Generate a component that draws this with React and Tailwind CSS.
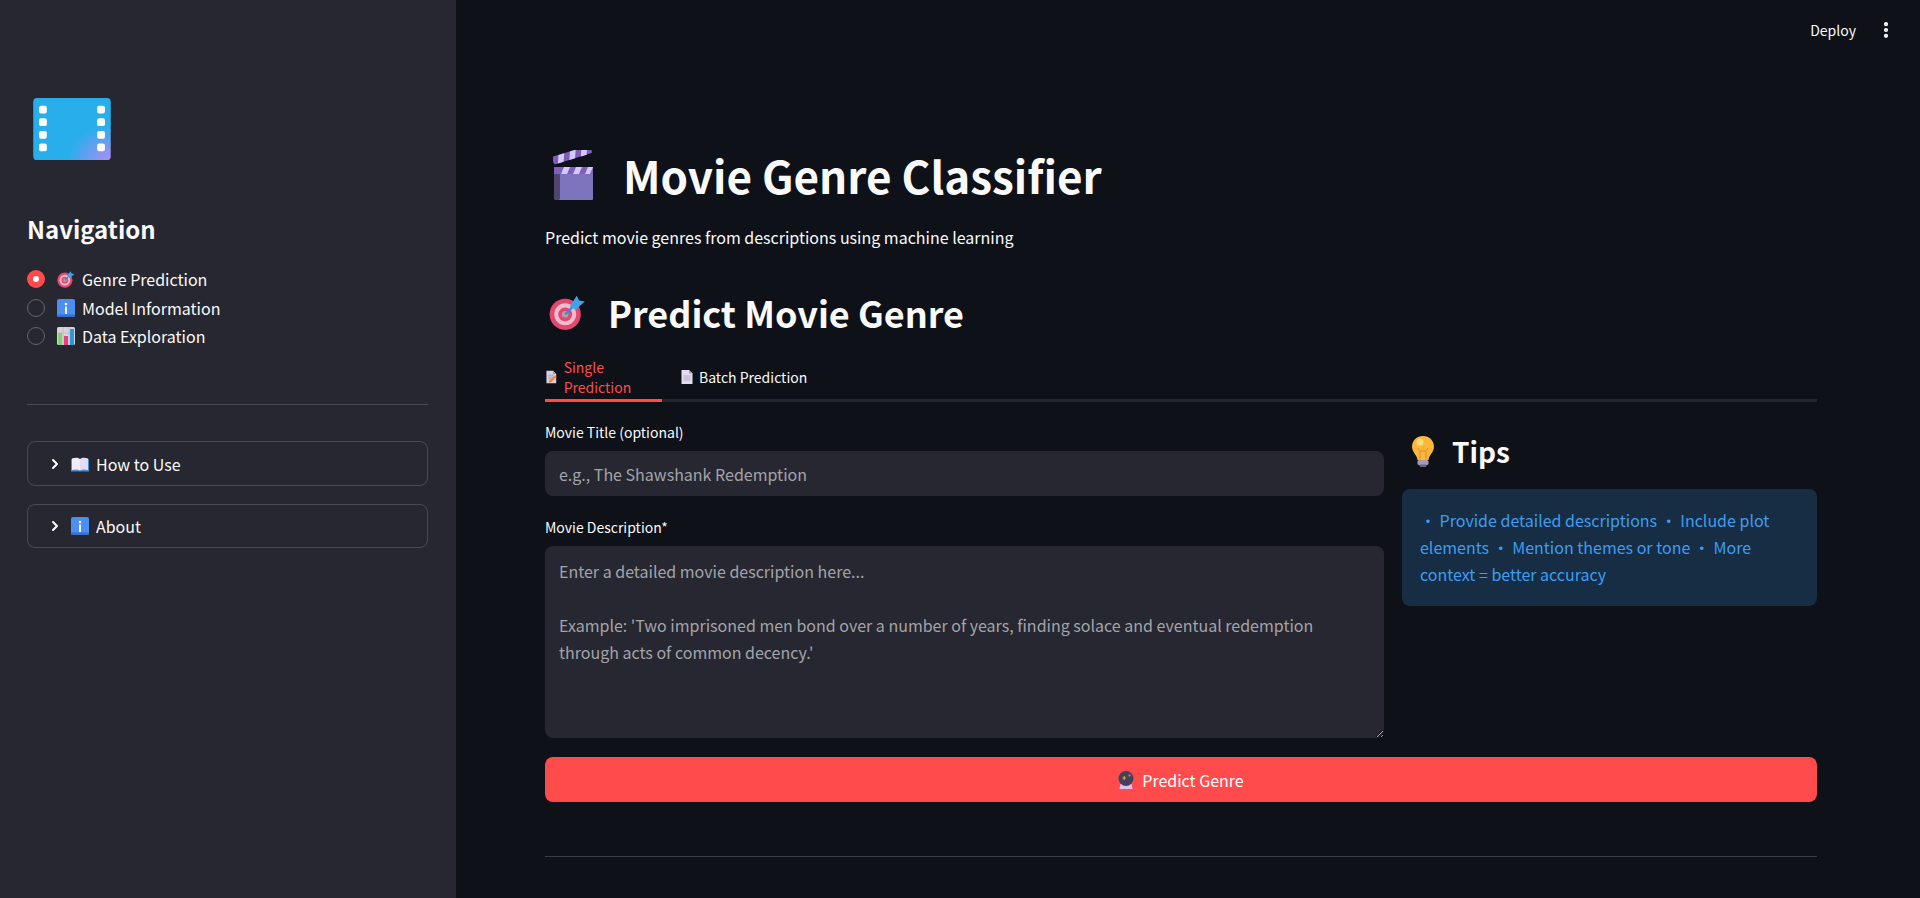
import { ChevronRight, EllipsisVertical } from "lucide-react";

function FilmLogo() {
  return (
    <svg viewBox="0 0 80 64" className="h-[62px] w-[80px]">
      <defs>
        <radialGradient id="filmCorner" cx="1" cy="1" r="0.55">
          <stop offset="0" stopColor="#b08cf5" />
          <stop offset="1" stopColor="#29aeec" />
        </radialGradient>
      </defs>
      <rect width="80" height="64" rx="4" fill="url(#filmCorner)" />
      {[8, 21, 34, 47].map((y) => (
        <g key={y} fill="#fff">
          <rect x="6" y={y} width="8" height="8" rx="2" />
          <rect x="66" y={y} width="8" height="8" rx="2" />
        </g>
      ))}
    </svg>
  );
}

function Clapper({ className }) {
  return (
    <svg viewBox="0 0 40 50" className={className}>
      <g transform="rotate(-17 3 14)">
        <rect x="1" y="6" width="40" height="8" rx="1.5" fill="#7e5cb8" />
        <path d="M8 6h6l-3 8H5zM20 6h6l-3 8h-6zM32 6h6l-3 8h-6z" fill="#d3c9fb" />
      </g>
      <rect x="1" y="17" width="40" height="33" rx="3" fill="#7d74bd" />
      <rect x="1" y="17" width="6" height="33" rx="2" fill="#50456f" />
      <rect x="1" y="17" width="40" height="7" fill="#7f5fb9" />
      <path d="M11 17h6l-3 7H8zM23 17h6l-3 7h-6zM35 17h5l-3 7h-5z" fill="#d3c9fb" />
    </svg>
  );
}

function Target({ className }) {
  return (
    <svg viewBox="0 0 32 32" className={className}>
      <circle cx="14" cy="18" r="13.5" fill="#e5476e" />
      <circle cx="14" cy="18" r="9.5" fill="#f2bcd0" />
      <circle cx="14" cy="18" r="6" fill="#e5476e" />
      <circle cx="14" cy="18" r="2.8" fill="#a9a4b2" />
      <path d="M14 18 22 10" stroke="#3d8bd4" strokeWidth="2" />
      <path d="M18 11 24 2l2 4 5 1-8 7z" fill="#3ea4ea" />
    </svg>
  );
}

function InfoIcon({ className }) {
  return (
    <svg viewBox="0 0 18 18" className={className}>
      <rect width="18" height="18" rx="2" fill="#4b8ff2" />
      <rect x="0" y="15.5" width="18" height="2.5" rx="1.2" fill="#3a70cc" />
      <circle cx="9" cy="5" r="1.3" fill="#fff" />
      <rect x="8" y="7.5" width="2" height="7.5" fill="#eef4ff" />
    </svg>
  );
}

function ChartIcon({ className }) {
  return (
    <svg viewBox="0 0 18 18" className={className}>
      <rect width="18" height="18" rx="1.5" fill="#d6d2da" />
      <path d="M6 0v18M12 0v18M0 6h18" stroke="#b9b4c0" strokeWidth="0.6" />
      <rect x="1" y="6" width="4" height="12" fill="#7ed56f" />
      <rect x="7" y="9" width="4" height="9" fill="#ec3d84" />
      <rect x="13" y="2" width="4" height="16" fill="#2d97dc" />
    </svg>
  );
}

function BookIcon({ className }) {
  return (
    <svg viewBox="0 0 18 18" className={className}>
      <path d="M0 4v12.5h18V4z" fill="#3f8fe0" />
      <path d="M1 3.5c3-1 6-1 8 .5v11.5c-2-1.2-5-1.4-8-.5z" fill="#f1ecf8" />
      <path d="M17 3.5c-3-1-6-1-8 .5v11.5c2-1.2 5-1.4 8-.5z" fill="#e4dcf2" />
    </svg>
  );
}

function MemoIcon({ className }) {
  return (
    <svg viewBox="0 0 12 14" className={className}>
      <path d="M0.5 0h7.5l3.5 3.5V14H0.5z" fill="#d9d0e2" />
      <path d="M8 0v3.5h3.5z" fill="#9c93a8" />
      <path d="M2.5 5h6M2.5 7h5M2.5 9h3" stroke="#9f97aa" strokeWidth="0.8" />
      <path d="M3 13.5 4 10.5 10.2 5l1.8 2-6 6z" fill="#f08a3c" />
    </svg>
  );
}

function PageIcon({ className }) {
  return (
    <svg viewBox="0 0 12 14" className={className}>
      <path d="M0.5 0h7.5l3.5 3.5V14H0.5z" fill="#e6dcef" />
      <path d="M8 0v3.5h3.5z" fill="#a79fb4" />
      <path d="M2.5 6h7M2.5 8h7M2.5 10h7" stroke="#a79fb4" strokeWidth="0.8" />
    </svg>
  );
}

function Bulb({ className }) {
  return (
    <svg viewBox="0 0 24 32" className={className}>
      <path
        d="M12 1C5.6 1 1 5.800 1 11.500c0 6 5 8 5.500 13.500h11C18 19.500 23 17.500 23 11.500 23 5.800 18.400 1 12 1z"
        fill="#fbb73c"
      />
      <circle cx="9" cy="7" r="3.500" fill="#ffdc7a" />
      <path d="M9 25v-9l-2-3M15 25v-9l2-3M9 16h6" stroke="#e58a2c" strokeWidth="1" fill="none" />
      <rect x="6.500" y="25" width="11" height="5" rx="1.500" fill="#a79ab8" />
      <rect x="8.500" y="29.500" width="7" height="2.500" rx="1" fill="#6e6280" />
    </svg>
  );
}

function CrystalBall({ className }) {
  return (
    <svg viewBox="0 0 16 18" className={className}>
      <path d="M2.500 13h11l1 5h-13z" fill="#d9c3f0" />
      <circle cx="8" cy="7.500" r="7.500" fill="#45405c" />
      <path d="M4.500 6.500h1.200V5h1v1.500H8v1H6.700V9h-1V7.500H4.500z" fill="#f5a93c" />
      <circle cx="11.500" cy="4.500" r="1" fill="#d59a3f" />
    </svg>
  );
}

function RadioRow({ icon, label, active }) {
  return (
    <div className="flex h-[28.5px] items-center">
      {active ? (
        <span className="flex h-[18px] w-[18px] items-center justify-center rounded-full bg-[#ff4b4b]">
          <span className="h-[6px] w-[6px] rounded-full bg-white" />
        </span>
      ) : (
        <span className="h-[18px] w-[18px] rounded-full border-[1.5px] border-[#63656c]" />
      )}
      <span className="ml-[12px] mr-[7px]">{icon}</span>
      <span className="text-base leading-6 text-[#fafafa]">{label}</span>
    </div>
  );
}

function Expander({ icon, label, height }) {
  return (
    <div className={`flex items-center rounded-lg border border-[#494a53] pl-[19px] ${height}`}>
      <ChevronRight className="h-[16px] w-[16px] text-white" strokeWidth={3} />
      <span className="ml-[8px] mr-[7px]">{icon}</span>
      <span className="text-base leading-6 text-[#fafafa]">{label}</span>
    </div>
  );
}

function Sidebar() {
  return (
    <aside className="flex h-full w-[456px] shrink-0 flex-col bg-[#262730] px-[27px] pt-[98px]">
      <div className="ml-[5px] h-[62px]">
        <FilmLogo />
      </div>
      <h2 className="mt-[53px] text-2xl leading-8 font-semibold text-[#fafafa]">Navigation</h2>
      <div className="mt-[20px]">
        <RadioRow active icon={<Target className="h-[18px] w-[18px]" />} label="Genre Prediction" />
        <RadioRow icon={<InfoIcon className="h-[18px] w-[18px]" />} label="Model Information" />
        <RadioRow icon={<ChartIcon className="h-[18px] w-[18px]" />} label="Data Exploration" />
      </div>
      <div className="mt-[53.5px] h-px w-[401px] bg-[#4a4b53]" />
      <div className="mt-[36px] flex w-[401px] flex-col gap-[18px]">
        <Expander icon={<BookIcon className="h-[18px] w-[18px]" />} label="How to Use" height="h-[45px]" />
        <Expander icon={<InfoIcon className="h-[18px] w-[18px]" />} label="About" height="h-[44px]" />
      </div>
    </aside>
  );
}

export default function App() {
  return (
    <div className="flex h-[898px] overflow-hidden bg-[#0e1117] font-['Noto_Sans_CJK_SC','Noto_Sans',sans-serif] text-[#fafafa]">
      <Sidebar />

      <main className="flex min-w-0 flex-1 flex-col">
        <div className="flex h-[60px] items-center justify-end pr-[24px]">
          <span className="text-sm leading-5">Deploy</span>
          <EllipsisVertical className="ml-[20px] h-[20px] w-[20px] text-white" strokeWidth={3} />
        </div>

        <div className="pl-[89px] pr-[103px]">
          {/* TITLE */}
          <div className="mt-[85px] flex h-[60px] items-center pl-[8px]">
            <Clapper className="h-[50px] w-[40px]" />
            <h1 className="ml-[30px] text-[44px] leading-[60px] font-bold">Movie Genre Classifier</h1>
          </div>
          <p className="mt-[20px] text-base leading-6">Predict movie genres from descriptions using machine learning</p>

          <div className="mt-[39px] flex h-[48px] items-center pl-[4px]">
            <Target className="h-[38px] w-[37px]" />
            <h2 className="ml-[22px] text-4xl leading-[48px] font-semibold">Predict Movie Genre</h2>
          </div>

          {/* TABS */}
          <div className="mt-[19px] flex h-[47px] gap-[19px] border-b-[3px] border-[#23252c]">
            <div className="-mb-[3px] flex h-[47px] w-[117px] items-center border-b-[3px] border-[#ff4b4b] pl-px">
              <MemoIcon className="h-[14px] w-[12px]" />
              <span className="ml-[7px] text-sm leading-5 text-[#ff4b4b]">Single Prediction</span>
            </div>
            <div className="flex h-[44px] items-center">
              <PageIcon className="h-[14px] w-[12px]" />
              <span className="ml-[6px] text-sm leading-5">Batch Prediction</span>
            </div>
          </div>

          {/* FORM */}
          <div className="mt-[20px] grid grid-cols-[839px_415px] gap-x-[18px]">
            <div>
              <label className="block text-sm leading-5">Movie Title (optional)</label>
              <input
                placeholder="e.g., The Shawshank Redemption"
                className="mt-[9px] block h-[45px] w-full rounded-lg bg-[#262730] px-[14px] text-base outline-none placeholder:text-[#a3a4aa]"
              />
              <label className="mt-[21px] block text-sm leading-5">Movie Description*</label>
              <textarea
                placeholder={"Enter a detailed movie description here...\n\nExample: 'Two imprisoned men bond over a number of years, finding solace and eventual redemption through acts of common decency.'"}
                className="mt-[9px] block h-[192px] w-full rounded-lg bg-[#262730] px-[14px] py-[12px] text-base leading-[27px] outline-none placeholder:text-[#a3a4aa]"
              />
            </div>
            <div className="mt-[9px]">
              <div className="flex h-[40px] items-center pl-[9px]">
                <Bulb className="h-[32px] w-[24px]" />
                <h3 className="ml-[17px] text-[28px] leading-10 font-semibold">Tips</h3>
              </div>
              <div className="mt-[18px] h-[117px] rounded-lg bg-[#172d43] px-[18px] py-[17.500px] text-base leading-[27.2px] text-[#3d9df3]">
                • Provide detailed descriptions • Include plot elements • Mention themes or tone • More context = better accuracy
              </div>
            </div>
          </div>

          <button className="mt-[19px] flex h-[45px] w-full items-center justify-center rounded-lg bg-[#ff4b4b] text-base text-white">
            <CrystalBall className="h-[18px] w-[16px]" />
            <span className="ml-[8px]">Predict Genre</span>
          </button>

          <div className="mt-[54px] h-px bg-[#3a3c43]" />
        </div>
      </main>
    </div>
  );
}
